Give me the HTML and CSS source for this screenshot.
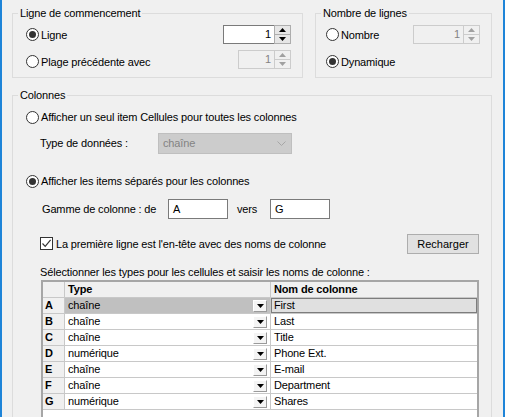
FILE: index.html
```html
<!DOCTYPE html>
<html lang="fr">
<head>
<meta charset="utf-8">
<title>Colonnes</title>
<link rel="stylesheet" href="styles.css">
</head>
<body>
<div class="window">
  <div class="top-row">
    <section class="group g-start">
      <div class="group-title">Ligne de commencement</div>
      <div class="row">
        <label class="radio"><span class="rb on"></span>Ligne</label>
        <div class="spin">
          <div class="val">1</div>
          <div class="btns">
            <span><svg width="7" height="4" viewBox="0 0 7 4"><path d="M3.5 0 L7 4 L0 4 Z"/></svg></span>
            <span><svg width="7" height="4" viewBox="0 0 7 4"><path d="M0 0 L7 0 L3.5 4 Z"/></svg></span>
          </div>
        </div>
      </div>
      <div class="row">
        <label class="radio"><span class="rb"></span>Plage précédente avec</label>
        <div class="spin disabled small up">
          <div class="val">1</div>
          <div class="btns">
            <span><svg width="7" height="4" viewBox="0 0 7 4"><path d="M3.5 0 L7 4 L0 4 Z"/></svg></span>
            <span><svg width="7" height="4" viewBox="0 0 7 4"><path d="M0 0 L7 0 L3.5 4 Z"/></svg></span>
          </div>
        </div>
      </div>
    </section>
    <section class="group g-count">
      <div class="group-title">Nombre de lignes</div>
      <div class="row">
        <label class="radio"><span class="rb"></span>Nombre</label>
        <div class="spin disabled">
          <div class="val">1</div>
          <div class="btns">
            <span><svg width="7" height="4" viewBox="0 0 7 4"><path d="M3.5 0 L7 4 L0 4 Z"/></svg></span>
            <span><svg width="7" height="4" viewBox="0 0 7 4"><path d="M0 0 L7 0 L3.5 4 Z"/></svg></span>
          </div>
        </div>
      </div>
      <div class="row">
        <label class="radio"><span class="rb on"></span>Dynamique</label>
      </div>
    </section>
  </div>

  <section class="group g-cols">
    <div class="group-title">Colonnes</div>
    <div class="c-r1">
      <label class="radio"><span class="rb"></span>Afficher un seul item Cellules pour toutes les colonnes</label>
    </div>
    <div class="c-type">
      <span class="type-label">Type de données :</span>
      <div class="select-dis">
        <span>chaîne</span>
        <svg width="9" height="5" viewBox="0 0 9 5"><path d="M0.5 0.5 L4.5 4.5 L8.5 0.5" fill="none" stroke="#a6a6a6" stroke-width="1"/></svg>
      </div>
    </div>
    <div class="c-r2">
      <label class="radio"><span class="rb on"></span>Afficher les items séparés pour les colonnes</label>
    </div>
    <div class="c-range">
      <span class="range-label">Gamme de colonne : de</span>
      <div class="text-in">A</div>
      <span class="vers">vers</span>
      <div class="text-in">G</div>
    </div>
    <div class="c-check">
      <label class="check"><span class="cb"><svg width="11" height="11" viewBox="0 0 11 11"><path d="M1.5 5.5 L4.2 8.3 L9.6 1.8" fill="none" stroke="#333" stroke-width="1.2"/></svg></span>La première ligne est l'en-tête avec des noms de colonne</label>
      <button class="btn" type="button">Recharger</button>
    </div>
    <div class="c-sel">Sélectionner les types pour les cellules et saisir les noms de colonne :</div>
    <div class="grid">
      <div class="g-row head">
        <div class="cell rh"></div>
        <div class="cell">Type</div>
        <div class="cell">Nom de colonne</div>
      </div>
      <div class="g-row sel">
        <div class="cell rh">A</div>
        <div class="cell type">chaîne<span class="dd"><svg width="7" height="4" viewBox="0 0 7 4"><path d="M0 0 L7 0 L3.5 4 Z"/></svg></span></div>
        <div class="cell name">First</div>
      </div>
      <div class="g-row">
        <div class="cell rh">B</div>
        <div class="cell type">chaîne<span class="dd"><svg width="7" height="4" viewBox="0 0 7 4"><path d="M0 0 L7 0 L3.5 4 Z"/></svg></span></div>
        <div class="cell name">Last</div>
      </div>
      <div class="g-row">
        <div class="cell rh">C</div>
        <div class="cell type">chaîne<span class="dd"><svg width="7" height="4" viewBox="0 0 7 4"><path d="M0 0 L7 0 L3.5 4 Z"/></svg></span></div>
        <div class="cell name">Title</div>
      </div>
      <div class="g-row">
        <div class="cell rh">D</div>
        <div class="cell type">numérique<span class="dd"><svg width="7" height="4" viewBox="0 0 7 4"><path d="M0 0 L7 0 L3.5 4 Z"/></svg></span></div>
        <div class="cell name">Phone Ext.</div>
      </div>
      <div class="g-row">
        <div class="cell rh">E</div>
        <div class="cell type">chaîne<span class="dd"><svg width="7" height="4" viewBox="0 0 7 4"><path d="M0 0 L7 0 L3.5 4 Z"/></svg></span></div>
        <div class="cell name">E-mail</div>
      </div>
      <div class="g-row">
        <div class="cell rh">F</div>
        <div class="cell type">chaîne<span class="dd"><svg width="7" height="4" viewBox="0 0 7 4"><path d="M0 0 L7 0 L3.5 4 Z"/></svg></span></div>
        <div class="cell name">Department</div>
      </div>
      <div class="g-row">
        <div class="cell rh">G</div>
        <div class="cell type">numérique<span class="dd"><svg width="7" height="4" viewBox="0 0 7 4"><path d="M0 0 L7 0 L3.5 4 Z"/></svg></span></div>
        <div class="cell name">Shares</div>
      </div>
    </div>
  </section>
</div>
</body>
</html>
```
FILE: styles.css
```css
* { box-sizing: border-box; }
html, body { margin: 0; padding: 0; }
body {
  width: 505px;
  height: 417px;
  overflow: hidden;
  background: #f0f0f0;
  font-family: "Liberation Sans", Arial, sans-serif;
  font-size: 11px;
  letter-spacing: -0.15px;
  color: #000;
}
.window {
  height: 417px;
  overflow: hidden;
  border-left: 2px solid #1e84d8;
  border-right: 2px solid #1e84d8;
  padding: 13px 11px 0 10px;
}
.top-row { display: flex; gap: 12px; height: 65px; }
.group {
  border: 1px solid #dcdcdc;
}
.group-title {
  margin: -8px 0 0 5px;
  padding: 0 2px;
  width: fit-content;
  height: 15px;
  line-height: 15px;
  background: #f0f0f0;
}
.g-start { width: 291px; }
.g-count { flex: 1; }
.row {
  display: flex;
  align-items: center;
  justify-content: space-between;
  height: 27px;
  padding-left: 13px;
  padding-right: 11px;
}
.g-count .row { padding-left: 10px; }
.radio { display: flex; align-items: center; gap: 2px; }
.rb {
  width: 13px; height: 13px;
  border: 1px solid #333;
  border-radius: 50%;
  background: #fff;
  display: flex; align-items: center; justify-content: center;
}
.rb.on::after {
  content: "";
  width: 7px; height: 7px;
  border-radius: 50%;
  background: #333;
}
.spin {
  display: flex;
  width: 68px;
  height: 19px;
}
.spin .val {
  flex: 1;
  background: #fff;
  border: 1px solid #7a7a7a;
  border-right: none;
  text-align: right;
  padding-right: 3px;
  line-height: 17px;
}
.spin .btns {
  width: 17px;
  display: flex;
  flex-direction: column;
  border: 1px solid #adadad;
  background: #e6e6e6;
}
.spin .btns span {
  flex: 1;
  display: flex; align-items: center; justify-content: center;
}
.spin .btns span + span { border-top: 1px solid #adadad; }
.spin .btns svg { fill: #000; }
.spin.disabled .val { background: #f0f0f0; border-color: #cccccc; color: #838383; }
.spin.disabled .btns { border-color: #cccccc; background: #f0f0f0; }
.spin.disabled .btns span + span { border-top-color: #cccccc; }
.spin.disabled .btns svg { fill: #a0a0a0; }
.spin.small { width: 53px; }
.spin.up { margin-bottom: 5px; }
.g-count .spin { width: 67px; }

.g-cols { margin-top: 17px; height: 400px; }
.c-r1 { height: 28px; display: flex; align-items: center; padding-left: 13px; }
.c-type { height: 24px; display: flex; align-items: center; padding-left: 27px; }
.type-label { width: 118px; }
.select-dis {
  width: 134px; height: 21px;
  background: #cccccc;
  border: 1px solid #bfbfbf;
  display: flex; align-items: center; justify-content: space-between;
  padding: 0 5px 0 4px;
  color: #838383;
}
.c-r2 { margin-top: 12px; height: 28px; display: flex; align-items: center; padding-left: 13px; }
.c-range { height: 28px; display: flex; align-items: center; padding-left: 29px; }
.range-label { width: 126px; }
.text-in {
  width: 60px; height: 20px;
  background: #fff;
  border: 1px solid #7a7a7a;
  padding-left: 4px;
  line-height: 18px;
}
.vers { margin-left: 9px; width: 33px; }
.c-check {
  margin-top: 10px; height: 21px;
  display: flex; align-items: center; justify-content: space-between;
  padding-left: 27px; padding-right: 12px;
}
.check { display: flex; align-items: center; gap: 3px; }
.cb {
  width: 13px; height: 13px;
  border: 1px solid #333;
  background: #fff;
  display: flex; align-items: center; justify-content: center;
}
.btn {
  width: 72px; height: 20px;
  background: #e1e1e1;
  border: 1px solid #adadad;
  font: inherit;
  color: #000;
  padding: 0;
}
.c-sel { margin-top: 10px; height: 16px; line-height: 16px; padding-left: 27px; }
.grid {
  margin-left: 28px;
  width: 438px;
  height: 200px;
  background: #fff;
  border: 2px solid #a6a6a6;
}
.g-row {
  display: grid;
  grid-template-columns: 22px 206px 206px;
  height: 16px;
}
.cell {
  border-bottom: 1px solid #c8c8c8;
  border-right: 1px solid #c8c8c8;
  padding-left: 3px;
  line-height: 15px;
  display: flex;
  align-items: center;
  white-space: nowrap;
}
.cell:last-child { border-right: none; }
.head .cell { background: #f0f0f0; font-weight: bold; }
.cell.rh { background: #f0f0f0; font-weight: bold; padding-left: 2px; }
.cell.type { justify-content: space-between; padding-right: 3px; }
.sel .cell.type { background: #c0c0c0; }
.sel .cell.name { background: #e0e0e0; box-shadow: inset 0 0 0 1px #7d7d7d; }
.dd {
  width: 14px; height: 12px;
  background: #f4f4f4;
  border: 1px solid;
  border-color: #ffffff #9a9a9a #9a9a9a #ffffff;
  display: flex; align-items: center; justify-content: center;
}
.dd svg { fill: #000; }
```
